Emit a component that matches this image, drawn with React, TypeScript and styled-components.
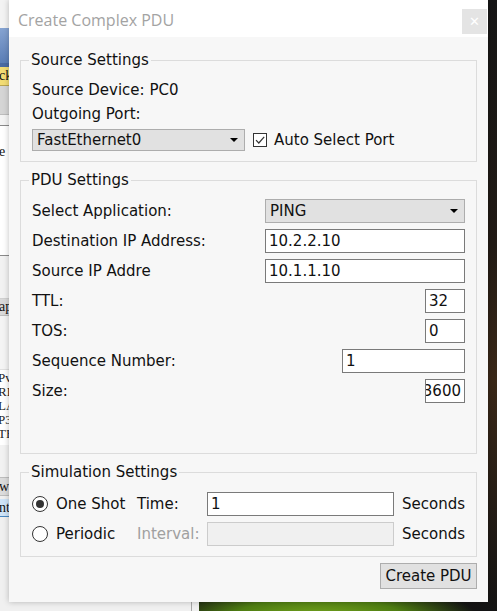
import styled, { createGlobalStyle } from "styled-components";

const GlobalStyle = createGlobalStyle`
  html, body {
    margin: 0;
    padding: 0;
    overflow: hidden;
    background: #1b1b1b;
  }
  * {
    box-sizing: border-box;
  }
`;

const Desktop = styled.div`
  position: relative;
  width: 497px;
  height: 611px;
  display: flex;
  overflow: hidden;
  font-family: "DejaVu Sans", Verdana, sans-serif;
`;

const BackPanel = styled.div`
  width: 192px;
  height: 100%;
  display: flex;
  flex-direction: column;
  background: #f0f0f0;
  border-right: 1px solid #a8a8a8;
  font-family: "Liberation Serif", serif;
  overflow: hidden;
`;

const Strip = styled.div<{ $h: number; $bg: string; $line?: string }>`
  height: ${({ $h }) => $h}px;
  flex-shrink: 0;
  background: ${({ $bg }) => $bg};
  color: #111;
  border-bottom: ${({ $line }) => ($line ? `1px solid ${$line}` : "none")};
  font-size: 14px;
  line-height: ${({ $h }) => $h - 1}px;
  margin-left: -1px;
  white-space: nowrap;
`;

const TextLines = styled.div`
  display: flex;
  flex-direction: column;
  font-family: "Liberation Serif", serif;
  font-size: 13px;
  line-height: 14px;
  color: #222;
  background: #fff;
  padding-top: 1px;
  height: 75px;
  flex-shrink: 0;
  margin-left: -2px;
`;

const Scenery = styled.div`
  flex: 1;
  height: 100%;
  background:
    radial-gradient(ellipse 160px 40px at 120px 620px, #79a91f 0%, #4e7d12 55%, rgba(30, 40, 10, 0) 100%),
    linear-gradient(180deg, #161616 0%, #221b15 40%, #3a2818 62%, #141414 100%);
  border-left: 7px solid #f0f0f0;
`;

const Window = styled.div`
  position: absolute;
  left: 9px;
  top: 0;
  width: 479px;
  height: 602px;
  background: #f7f7f7;
  display: flex;
  flex-direction: column;
  box-shadow: 0 0 6px rgba(0, 0, 0, 0.25);
`;

const TitleBar = styled.div`
  height: 37px;
  background: #ffffff;
  display: flex;
  align-items: center;
  justify-content: space-between;
  padding-left: 9px;
  padding-right: 1px;
`;

const TitleText = styled.span`
  font-family: "Open Sans", "Noto Sans", sans-serif;
  font-size: 16px;
  color: #a3a3a3;
  margin-top: 2px;
`;

const CloseButton = styled.button`
  width: 25px;
  height: 25px;
  margin-top: 6px;
  border: none;
  padding: 0;
  background: #e4e4e4;
  color: #ffffff;
  font-size: 13px;
  line-height: 25px;
  font-family: "DejaVu Sans", sans-serif;
`;

const Body = styled.div`
  flex: 1;
  display: flex;
  flex-direction: column;
  padding: 14px 11px 0 11px;
  gap: 9px;
  font-size: 15px;
  color: #111;
`;

const Group = styled.fieldset<{ $pt: number; $pb: number }>`
  margin: 0;
  border: 1px solid #dcdcdc;
  padding: ${({ $pt }) => $pt}px 11px ${({ $pb }) => $pb}px 11px;
  display: flex;
  flex-direction: column;
  min-width: 0;
`;

const GroupTitle = styled.legend`
  margin-left: -3px;
  padding: 0 2px;
  font-size: 15px;
  line-height: 18px;
  color: #111;
`;

const TextRow = styled.div`
  height: 24px;
  line-height: 24px;
`;

const PortRow = styled.div`
  display: flex;
  align-items: center;
  margin-top: 3px;
  gap: 8px;
`;

const Combo = styled.div<{ $w: number; $h: number }>`
  width: ${({ $w }) => $w}px;
  height: ${({ $h }) => $h}px;
  background: #e1e1e1;
  border: 1px solid #adadad;
  padding-left: 4px;
  padding-right: 6px;
  display: flex;
  align-items: center;
  justify-content: space-between;
`;

const ComboArrow = styled.span`
  width: 0;
  height: 0;
  border-left: 4px solid transparent;
  border-right: 4px solid transparent;
  border-top: 4px solid #000;
`;

const CheckLabel = styled.label`
  display: flex;
  align-items: center;
  gap: 7px;
`;

const CheckBox = styled.span`
  width: 14px;
  height: 14px;
  border: 1px solid #333;
  background: #fff;
  display: flex;
  align-items: center;
  justify-content: center;
`;

const FieldList = styled.div`
  display: flex;
  flex-direction: column;
  gap: 6px;
`;

const FieldRow = styled.div`
  display: flex;
  align-items: center;
  justify-content: space-between;
  height: 24px;
`;

const Field = styled.div<{ $w: number; $right?: boolean; $disabled?: boolean }>`
  width: ${({ $w }) => $w}px;
  height: 24px;
  background: ${({ $disabled }) => ($disabled ? "#f0f0f0" : "#ffffff")};
  border: 1px solid ${({ $disabled }) => ($disabled ? "#cccccc" : "#7a7a7a")};
  padding: 0 3px;
  display: flex;
  align-items: center;
  justify-content: ${({ $right }) => ($right ? "flex-end" : "flex-start")};
  overflow: hidden;
  white-space: nowrap;
`;

const SimGrid = styled.div`
  display: grid;
  grid-template-columns: 24px 81px 70px 187px 1fr;
  grid-auto-rows: 24px;
  row-gap: 6px;
  align-items: center;
`;

const Radio = styled.span<{ $on?: boolean }>`
  width: 16px;
  height: 16px;
  border-radius: 50%;
  border: 1px solid #333;
  background: #fff;
  display: flex;
  align-items: center;
  justify-content: center;
  &::after {
    content: "";
    width: 8px;
    height: 8px;
    border-radius: 50%;
    background: ${({ $on }) => ($on ? "#333" : "transparent")};
  }
`;

const Caption = styled.span<{ $muted?: boolean; $pad?: number }>`
  color: ${({ $muted }) => ($muted ? "#a0a0a0" : "#111")};
  padding-left: ${({ $pad }) => $pad ?? 0}px;
`;

const Footer = styled.div`
  display: flex;
  justify-content: flex-end;
  margin-top: -3px;
`;

const ActionButton = styled.button`
  width: 97px;
  height: 26px;
  background: #e1e1e1;
  border: 1px solid #adadad;
  font-family: "DejaVu Sans", sans-serif;
  font-size: 15px;
  color: #111;
  padding: 0;
`;

const pduFields = [
  { label: "Destination IP Address:", value: "10.2.2.10", w: 200 },
  { label: "Source IP Addre", value: "10.1.1.10", w: 200 },
  { label: "TTL:", value: "32", w: 40 },
  { label: "TOS:", value: "0", w: 40 },
  { label: "Sequence Number:", value: "1", w: 123 },
  { label: "Size:", value: "3600", w: 40, right: true },
];

export default function App() {
  return (
    <>
      <GlobalStyle />
      <Desktop>
        <BackPanel>
          <Strip $h={28} $bg="#f3f3f3" />
          <Strip $h={35} $bg="linear-gradient(180deg, #86a4d2, #5b7eb6)" />
          <Strip $h={4} $bg="#4b6ba2" />
          <Strip $h={19} $bg="#f2dc74" $line="#b9a550">ck</Strip>
          <Strip $h={29} $bg="#d5d5d5" $line="#bdbdbd" />
          <Strip $h={11} $bg="#f4f4f4" $line="#8a8a8a" />
          <Strip $h={130} $bg="#ffffff" $line="#8a8a8a">
            <div style={{ lineHeight: "52px" }}>e</div>
          </Strip>
          <Strip $h={43} $bg="#f2f2f2" $line="#d0d0d0" />
          <Strip $h={17} $bg="#d9d9d9" $line="#bdbdbd">ap</Strip>
          <Strip $h={54} $bg="#f4f4f4" $line="#e0e0e0" />
          <TextLines>
            <span>Pv</span>
            <span>RE</span>
            <span>LA</span>
            <span>P3</span>
            <span>TH</span>
          </TextLines>
          <Strip $h={33} $bg="#f2f2f2" $line="#bdbdbd" />
          <Strip $h={18} $bg="#dcdcdc" $line="#bdbdbd">w</Strip>
          <Strip $h={3} $bg="#f0f0f0" />
          <Strip $h={18} $bg="#cfe4f8" $line="#4a88c0">nt</Strip>
          <Strip $h={100} $bg="#f0f0f0" />
        </BackPanel>
        <Scenery />

        <Window>
          <TitleBar>
            <TitleText>Create Complex PDU</TitleText>
            <CloseButton>✕</CloseButton>
          </TitleBar>
          <Body>
            <Group $pt={9} $pb={10}>
              <GroupTitle>Source Settings</GroupTitle>
              <TextRow>Source Device: PC0</TextRow>
              <TextRow>Outgoing Port:</TextRow>
              <PortRow>
                <Combo $w={213} $h={22}>
                  FastEthernet0
                  <ComboArrow />
                </Combo>
                <CheckLabel>
                  <CheckBox>
                    <svg width="12" height="12" viewBox="0 0 12 12">
                      <path d="M2 6.2 L4.8 9 L10.2 2.8" fill="none" stroke="#333" strokeWidth="1.2" />
                    </svg>
                  </CheckBox>
                  Auto Select Port
                </CheckLabel>
              </PortRow>
            </Group>

            <Group $pt={10} $pb={50}>
              <GroupTitle>PDU Settings</GroupTitle>
              <FieldList>
                <FieldRow>
                  <span>Select Application:</span>
                  <Combo $w={200} $h={24}>
                    PING
                    <ComboArrow />
                  </Combo>
                </FieldRow>
                {pduFields.map((f) => (
                  <FieldRow key={f.label}>
                    <span>{f.label}</span>
                    <Field $w={f.w} $right={f.right}>{f.value}</Field>
                  </FieldRow>
                ))}
              </FieldList>
            </Group>

            <Group $pt={11} $pb={10}>
              <GroupTitle>Simulation Settings</GroupTitle>
              <SimGrid>
                <Radio $on />
                <Caption>One Shot</Caption>
                <Caption>Time:</Caption>
                <Field $w={187}>1</Field>
                <Caption $pad={8}>Seconds</Caption>

                <Radio />
                <Caption>Periodic</Caption>
                <Caption $muted>Interval:</Caption>
                <Field $w={187} $disabled />
                <Caption $pad={8}>Seconds</Caption>
              </SimGrid>
            </Group>

            <Footer>
              <ActionButton>Create PDU</ActionButton>
            </Footer>
          </Body>
        </Window>
      </Desktop>
    </>
  );
}
